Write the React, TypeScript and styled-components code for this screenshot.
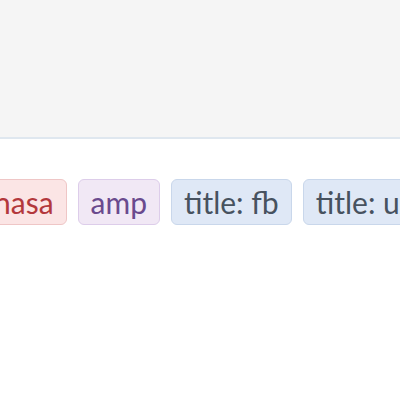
import React from "react";
import styled, { createGlobalStyle } from "styled-components";

const Global = createGlobalStyle`
  html, body { margin: 0; padding: 0; background: #ffffff; }
  body { font-family: Lato, "Open Sans", sans-serif; }
`;

const Page = styled.div`
  width: 400px;
  height: 400px;
  overflow: hidden;
  display: flex;
  flex-direction: column;
`;

const Header = styled.header`
  height: 137px;
  flex: none;
  background: #f5f5f5;
  border-bottom: 2px solid #dfe7ef;
`;

const TagRow = styled.div`
  display: flex;
  gap: 11px;
  margin-top: 40px;
  margin-left: -19px;
  white-space: nowrap;
`;

type Tone = "red" | "purple" | "blue";

const tones: Record<Tone, { bg: string; border: string; color: string }> = {
  red: { bg: "#fbe5e5", border: "#efc6c6", color: "#b3383c" },
  purple: { bg: "#f1e8f5", border: "#ddcdea", color: "#6a4a8e" },
  blue: { bg: "#dfe8f6", border: "#c9d7eb", color: "#47525f" },
};

const Tag = styled.span<{ $tone: Tone }>`
  flex: none;
  box-sizing: border-box;
  height: 46px;
  padding: 0 12px;
  display: inline-flex;
  align-items: center;
  border-radius: 6px;
  font-family: Lato, "Open Sans", sans-serif;
  font-size: 30px;
  line-height: 1;
  background: ${(p) => tones[p.$tone].bg};
  border: 1px solid ${(p) => tones[p.$tone].border};
  color: ${(p) => tones[p.$tone].color};
`;

export default function App() {
  return (
    <>
      <Global />
      <Page>
        <Header />
        <TagRow>
          <Tag $tone="red">nasa</Tag>
          <Tag $tone="purple">amp</Tag>
          <Tag $tone="blue">title: fb</Tag>
          <Tag $tone="blue">title: ux</Tag>
        </TagRow>
      </Page>
    </>
  );
}
